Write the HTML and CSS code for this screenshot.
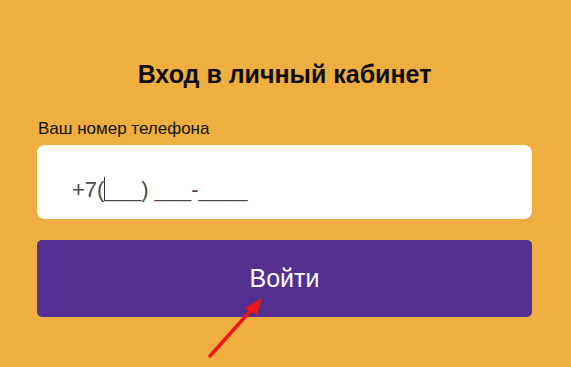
FILE: index.html
```html
<!DOCTYPE html>
<html lang="ru">
<head>
  <meta charset="UTF-8">
  <meta name="viewport" content="width=device-width, initial-scale=1.0">
  <title>Вход в личный кабинет</title>
  <link rel="stylesheet" href="styles.css">
</head>
<body>
  <div class="login-box">
    <h1>Вход в личный кабинет</h1>

    <label class="field-label" for="phone">Ваш номер телефона</label>
    <div class="phone-input">
      <span class="mask">+7(<span class="caret"></span>___) ___-____</span>
    </div>

    <button class="btn-login">Войти</button>
  </div>

  <!-- стрелка-подсказка поверх кнопки -->
  <svg class="hint-arrow" width="80" height="80" viewBox="0 0 80 80">
    <line x1="12" y1="69" x2="55" y2="21" stroke="#f01414" stroke-width="3.4" stroke-linecap="round"/>
    <polygon points="64,11 47,21 59,28" fill="#f01414"/>
  </svg>
</body>
</html>
```

FILE: styles.css
```css
body {
  font-family: 'Liberation Sans', Arial, sans-serif;
  background: #efae40;
  margin: 0;
  padding: 0;
  height: 367px;
  overflow: hidden;
  position: relative;
}

.login-box {
  width: 495px;
  margin-left: 37px;
  padding-top: 59px;
  display: flex;
  flex-direction: column;
}

h1 {
  font-size: 25px;
  font-weight: bold;
  color: #0d0d0d;
  text-align: center;
  margin: 0 0 30px;
  line-height: 30px;
}

.field-label {
  font-size: 17px;
  color: #111;
  margin-left: 1px;
  line-height: 20px;
  margin-bottom: 6px;
}

.phone-input {
  background: #fff;
  border-radius: 8px;
  height: 74px;
  box-sizing: border-box;
  padding: 32px 0 0 35px;
}

.mask {
  font-size: 22px;
  color: #4a4a4a;
  line-height: 26px;
  position: relative;
}

.caret {
  display: inline-block;
  width: 1px;
  height: 24px;
  background: #333;
  vertical-align: -4px;
  margin-right: -1px;
}

.btn-login {
  margin-top: 21px;
  height: 77px;
  border: none;
  border-radius: 5px;
  background: #532f8f;
  color: #fff;
  font-family: 'Liberation Sans', Arial, sans-serif;
  font-size: 25px;
  cursor: pointer;
}

.hint-arrow {
  position: absolute;
  left: 198px;
  top: 287px;
}
```
